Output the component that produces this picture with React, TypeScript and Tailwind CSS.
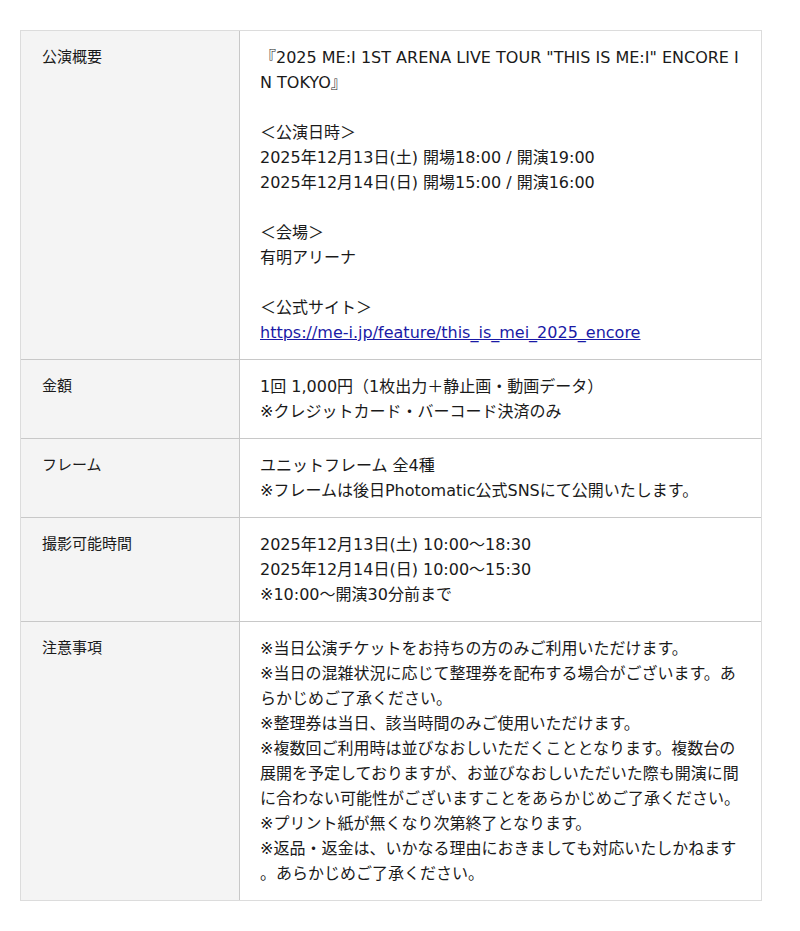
import React from "react";

const rows: { label: string; lines: (string | { link: string })[] }[] = [
  {
    label: "公演概要",
    lines: [
      '『2025 ME:I 1ST ARENA LIVE TOUR "THIS IS ME:I" ENCORE IN TOKYO』',
      "",
      "＜公演日時＞",
      "2025年12月13日(土) 開場18:00 / 開演19:00",
      "2025年12月14日(日) 開場15:00 / 開演16:00",
      "",
      "＜会場＞",
      "有明アリーナ",
      "",
      "＜公式サイト＞",
      { link: "https://me-i.jp/feature/this_is_mei_2025_encore" },
    ],
  },
  {
    label: "金額",
    lines: ["1回 1,000円（1枚出力＋静止画・動画データ）", "※クレジットカード・バーコード決済のみ"],
  },
  {
    label: "フレーム",
    lines: ["ユニットフレーム 全4種", "※フレームは後日Photomatic公式SNSにて公開いたします。"],
  },
  {
    label: "撮影可能時間",
    lines: ["2025年12月13日(土) 10:00〜18:30", "2025年12月14日(日) 10:00〜15:30", "※10:00〜開演30分前まで"],
  },
  {
    label: "注意事項",
    lines: [
      "※当日公演チケットをお持ちの方のみご利用いただけます。",
      "※当日の混雑状況に応じて整理券を配布する場合がございます。あらかじめご了承ください。",
      "※整理券は当日、該当時間のみご使用いただけます。",
      "※複数回ご利用時は並びなおしいただくこととなります。複数台の展開を予定しておりますが、お並びなおしいただいた際も開演に間に合わない可能性がございますことをあらかじめご了承ください。",
      "※プリント紙が無くなり次第終了となります。",
      "※返品・返金は、いかなる理由におきましても対応いたしかねます。あらかじめご了承ください。",
    ],
  },
];

export default function App() {
  return (
    <div
      className="bg-white min-h-[931px] pt-[30px] pl-[20px] text-[#1a1a1a]"
      style={{ fontFamily: '"DejaVu Sans", "Noto Sans CJK JP", sans-serif' }}
    >
      <div className="w-[742px] border border-[#dcdcdc]">
        {rows.map((r, i) => (
          <div
            key={i}
            className={`grid grid-cols-[218px_1fr] ${i > 0 ? "border-t border-[#c8c8c8]" : ""}`}
          >
            <div className="bg-[#f4f4f4] px-[21px] py-[14px] text-[15px] leading-[25px]">{r.label}</div>
            <div className="border-l border-[#c8c8c8] pl-[20px] pr-[21px] py-[14px] text-[16px] leading-[25px] [line-break:anywhere] [word-break:break-all]">
              {r.lines.map((l, j) =>
                typeof l === "string" ? (
                  l === "" ? (
                    <div key={j} className="h-[25px]" />
                  ) : (
                    <div key={j}>{l}</div>
                  )
                ) : (
                  <div key={j}>
                    <a href="#" className="text-[#1a1aa6] underline">
                      {l.link}
                    </a>
                  </div>
                )
              )}
            </div>
          </div>
        ))}
      </div>
    </div>
  );
}
